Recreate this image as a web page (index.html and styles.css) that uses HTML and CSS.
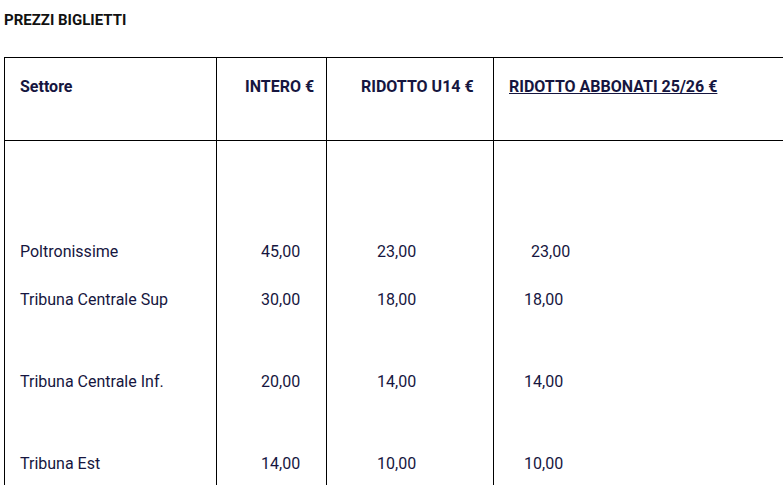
FILE: index.html
```html
<!DOCTYPE html>
<html lang="it">
<head>
<meta charset="utf-8">
<title>Prezzi biglietti</title>
<link rel="stylesheet" href="styles.css">
</head>
<body>
<h2 class="title">PREZZI BIGLIETTI</h2>
<table class="prices">
  <colgroup>
    <col class="c1"><col class="c2"><col class="c3"><col class="c4">
  </colgroup>
  <thead>
    <tr>
      <th class="h1">Settore</th>
      <th class="h2">INTERO €</th>
      <th class="h3">RIDOTTO U14 €</th>
      <th class="h4"><span class="link">RIDOTTO ABBONATI 25/26 €</span></th>
    </tr>
  </thead>
  <tbody>
    <tr>
      <td class="b1">
        <div class="line first">Poltronissime</div>
        <div class="line near">Tribuna Centrale Sup</div>
        <div class="line far">Tribuna Centrale Inf.</div>
        <div class="line far">Tribuna Est</div>
      </td>
      <td class="b2">
        <div class="line first">45,00</div>
        <div class="line near">30,00</div>
        <div class="line far">20,00</div>
        <div class="line far">14,00</div>
      </td>
      <td class="b3">
        <div class="line first">23,00</div>
        <div class="line near">18,00</div>
        <div class="line far">14,00</div>
        <div class="line far">10,00</div>
      </td>
      <td class="b4">
        <div class="line first indent">23,00</div>
        <div class="line near">18,00</div>
        <div class="line far">14,00</div>
        <div class="line far">10,00</div>
      </td>
    </tr>
  </tbody>
</table>
</body>
</html>
```

FILE: styles.css
```css
html, body {
  overflow: hidden;
}
body {
  margin: 0;
  padding: 0 4px;
  background: #fff;
  font-family: Roboto, "Liberation Sans", sans-serif;
  color: #161640;
}
.title {
  margin: 10px 0 0 0;
  font-size: 15px;
  line-height: 20px;
  font-weight: 700;
  color: #111;
}
.prices {
  margin-top: 27px;
  border-collapse: collapse;
  table-layout: fixed;
  width: 860px;
}
.c1 { width: 212px; }
.c2 { width: 110px; }
.c3 { width: 167px; }
.c4 { width: 371px; }
.prices th, .prices td {
  border: 1px solid #000;
  vertical-align: top;
  text-align: left;
  font-size: 16px;
  line-height: 20px;
}
.prices th {
  font-weight: 700;
  height: 83px;
  box-sizing: border-box;
  padding: 19px 0 0 0;
}
.h1 { padding-left: 15px !important; }
.h2 { padding-left: 28px !important; }
.h3 { padding-left: 34px !important; }
.h4 { padding-left: 15px !important; }
.link { text-decoration: underline; }
.prices td {
  padding: 101px 0 60px 0;
  border-bottom: none;
}
.b1 { padding-left: 15px !important; }
.b2 { padding-left: 44px !important; }
.b3 { padding-left: 50px !important; }
.b4 { padding-left: 30px !important; }
.line { white-space: nowrap; }
.near { margin-top: 28px; }
.far { margin-top: 62px; }
.indent { padding-left: 7px; }
```
